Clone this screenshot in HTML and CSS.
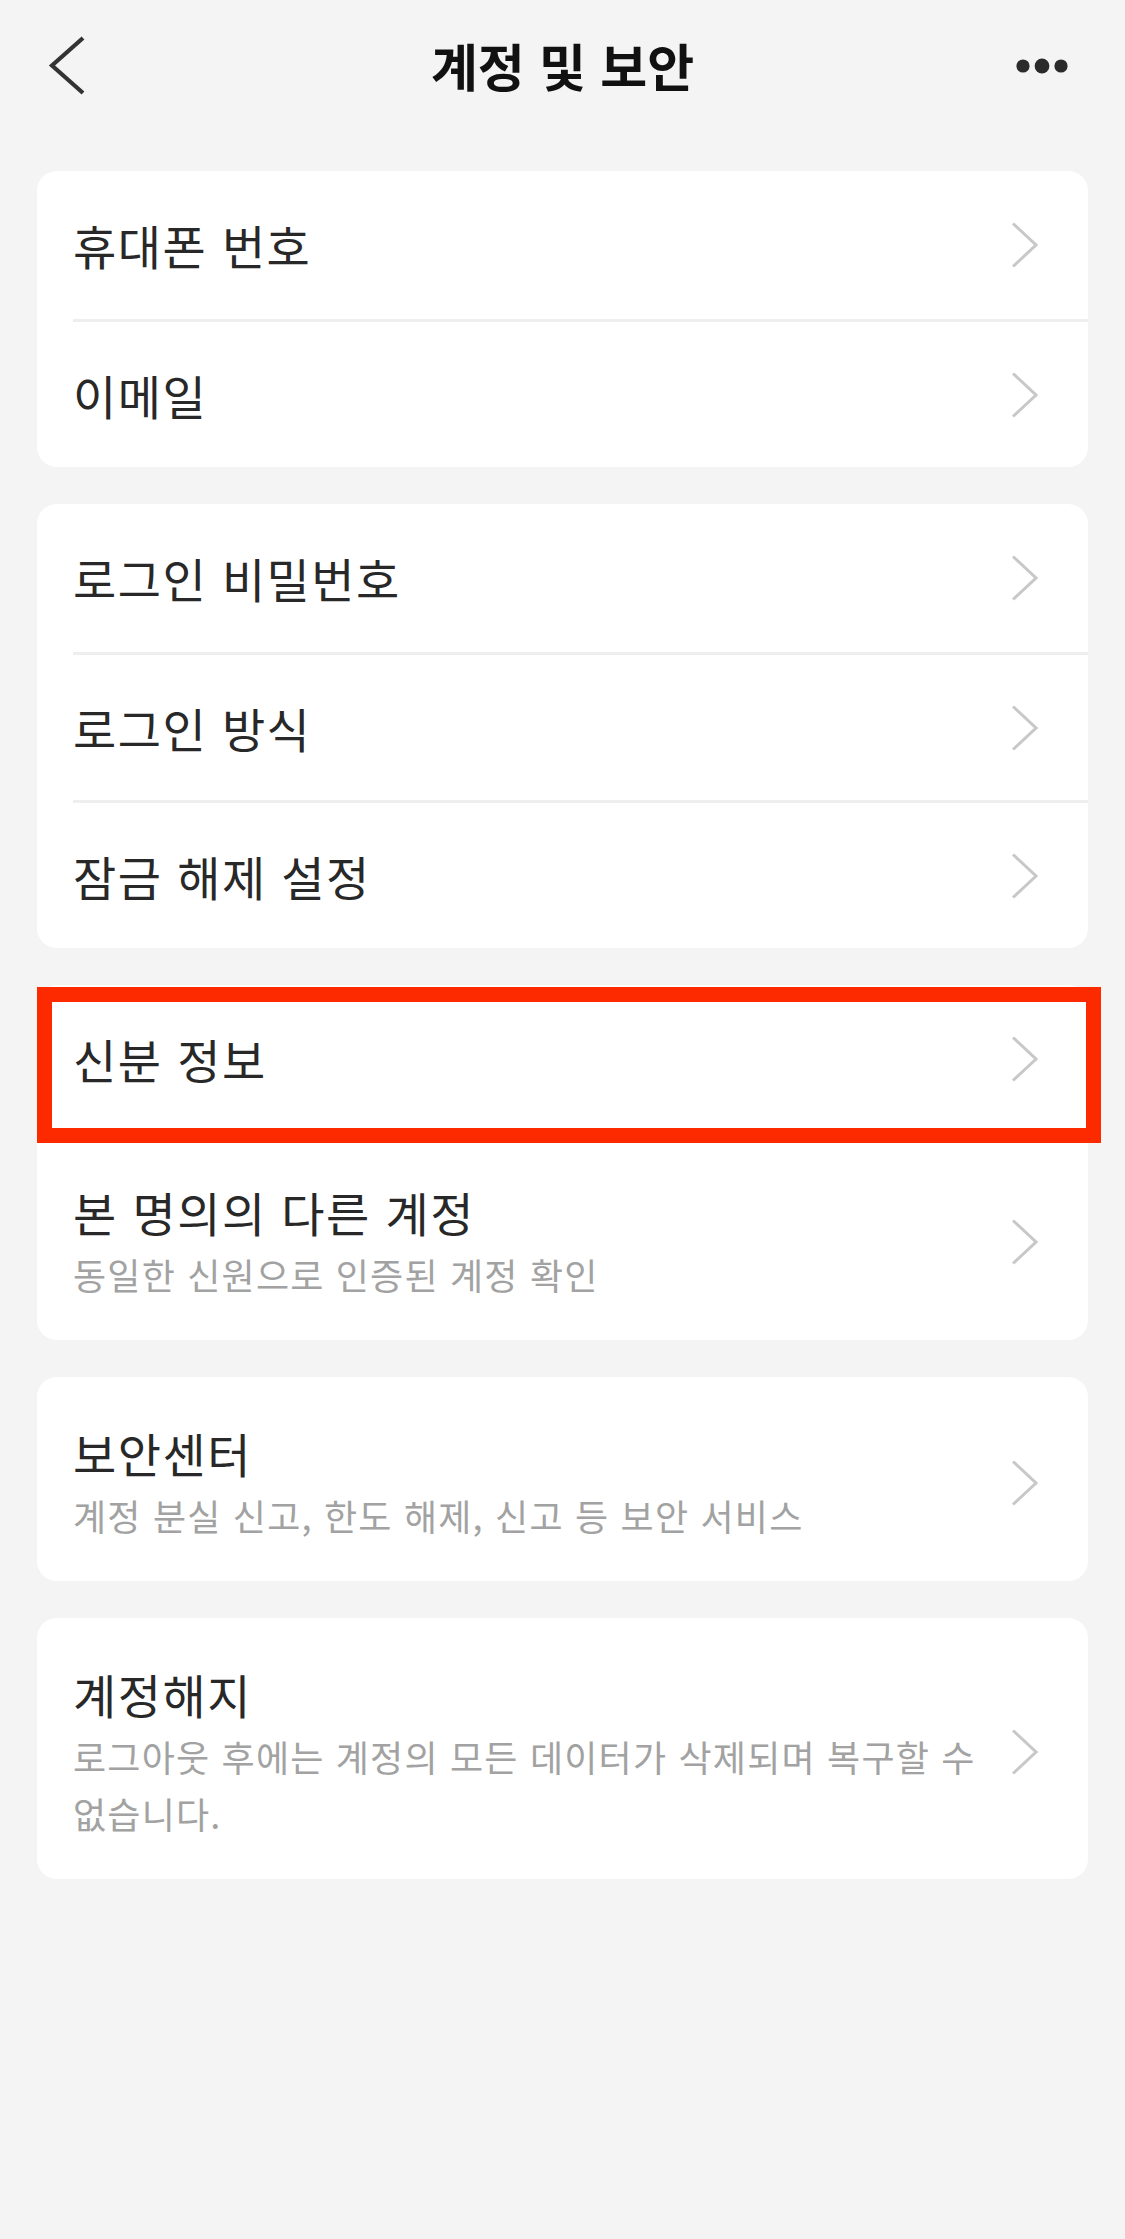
FILE: index.html
```html
<!DOCTYPE html>
<html lang="ko">
<head>
<meta charset="utf-8">
<title>계정 및 보안</title>
<link rel="stylesheet" href="styles.css">
</head>
<body>
<header class="topbar">
  <div class="topbar-left">
    <svg class="back-icon" width="40" height="64" viewBox="0 0 40 64">
      <polyline points="35,4 4,31.5 35,59" fill="none" stroke="#333" stroke-width="4.2" stroke-linejoin="miter"/>
    </svg>
  </div>
  <h1 class="topbar-title">계정 및 보안</h1>
  <div class="topbar-right">
    <svg class="more-icon" width="56" height="20" viewBox="0 0 56 20">
      <circle cx="9" cy="10" r="6.6" fill="#2b2b2b"/>
      <circle cx="28" cy="10" r="7.4" fill="#2b2b2b"/>
      <circle cx="47" cy="10" r="6.6" fill="#2b2b2b"/>
    </svg>
  </div>
</header>

<main class="list">
  <section class="card">
    <div class="row"><span class="label">휴대폰 번호</span><svg class="chev" width="28" height="46" viewBox="0 0 28 46"><polyline points="3,1.5 26,23 3,44.5"/></svg></div>
    <div class="row"><span class="label">이메일</span><svg class="chev" width="28" height="46" viewBox="0 0 28 46"><polyline points="3,1.5 26,23 3,44.5"/></svg></div>
  </section>

  <section class="card">
    <div class="row"><span class="label">로그인 비밀번호</span><svg class="chev" width="28" height="46" viewBox="0 0 28 46"><polyline points="3,1.5 26,23 3,44.5"/></svg></div>
    <div class="row"><span class="label">로그인 방식</span><svg class="chev" width="28" height="46" viewBox="0 0 28 46"><polyline points="3,1.5 26,23 3,44.5"/></svg></div>
    <div class="row"><span class="label">잠금 해제 설정</span><svg class="chev" width="28" height="46" viewBox="0 0 28 46"><polyline points="3,1.5 26,23 3,44.5"/></svg></div>
  </section>

  <section class="card">
    <div class="row row-highlighted"><span class="label">신분 정보</span><svg class="chev" width="28" height="46" viewBox="0 0 28 46"><polyline points="3,1.5 26,23 3,44.5"/></svg><div class="highlight"></div></div>
    <div class="row row-two">
      <div class="text">
        <div class="label">본 명의의 다른 계정</div>
        <div class="sub">동일한 신원으로 인증된 계정 확인</div>
      </div>
      <svg class="chev" width="28" height="46" viewBox="0 0 28 46"><polyline points="3,1.5 26,23 3,44.5"/></svg>
    </div>
  </section>

  <section class="card">
    <div class="row row-two">
      <div class="text">
        <div class="label">보안센터</div>
        <div class="sub">계정 분실 신고, 한도 해제, 신고 등 보안 서비스</div>
      </div>
      <svg class="chev" width="28" height="46" viewBox="0 0 28 46"><polyline points="3,1.5 26,23 3,44.5"/></svg>
    </div>
  </section>

  <section class="card">
    <div class="row row-two">
      <div class="text">
        <div class="label">계정해지</div>
        <div class="sub">로그아웃 후에는 계정의 모든 데이터가 삭제되며 복구할 수 없습니다.</div>
      </div>
      <svg class="chev" width="28" height="46" viewBox="0 0 28 46"><polyline points="3,1.5 26,23 3,44.5"/></svg>
    </div>
  </section>
</main>
</body>
</html>
```

FILE: styles.css
```css
html {
  background: #f4f4f4;
}

body {
  margin: 0;
  min-height: 2239px;
  background: #f4f4f4;
  font-family: "Noto Sans CJK KR", "Noto Sans", sans-serif;
  color: #262626;
}

.topbar {
  height: 130px;
  display: grid;
  grid-template-columns: 1fr auto 1fr;
  align-items: center;
}

.topbar-left {
  padding-left: 48px;
  display: flex;
  align-items: center;
}

.back-icon {
  display: block;
  margin-top: 2px;
}

.topbar-title {
  margin: 0;
  font-size: 51px;
  font-weight: 700;
  letter-spacing: 0;
  color: #111;
  line-height: 70px;
}

.topbar-right {
  justify-self: end;
  padding-right: 55px;
  display: flex;
  align-items: center;
}

.more-icon {
  display: block;
  margin-top: 2px;
}

.list {
  padding: 41px 37px 0;
  display: flex;
  flex-direction: column;
  gap: 37px;
}

.card {
  background: #fff;
  border-radius: 20px;
}

.row {
  position: relative;
  box-sizing: border-box;
  height: 148px;
  margin-left: 36px;
  padding-right: 50px;
  display: flex;
  align-items: center;
  justify-content: space-between;
}

.row + .row {
  border-top: 3px solid #eeeeee;
}

.row-two {
  height: auto;
  padding-top: 44px;
  padding-bottom: 37px;
}

.label {
  font-size: 47px;
  letter-spacing: 1.5px;
  line-height: 64px;
  color: #282828;
  font-weight: 400;
}

.text {
  flex: 1;
  padding-right: 8px;
}

.sub {
  margin-top: 2px;
  font-size: 36px;
  letter-spacing: 1.2px;
  line-height: 57px;
  color: #a2a2a2;
  word-break: keep-all;
}

.chev {
  flex: none;
  display: block;
}

.chev polyline {
  fill: none;
  stroke: #c8c8c8;
  stroke-width: 3;
}

.highlight {
  position: absolute;
  z-index: 2;
  top: 2px;
  left: -36px;
  right: -13px;
  bottom: -10px;
  border: 15px solid #fd2a00;
  pointer-events: none;
}
```
